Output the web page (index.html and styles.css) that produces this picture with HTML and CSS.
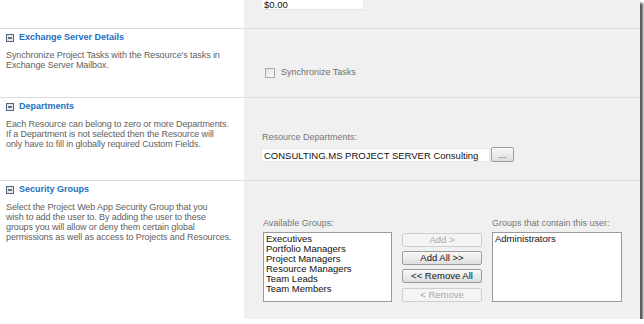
FILE: index.html
```html
<!DOCTYPE html>
<html lang="en">
<head>
  <meta charset="UTF-8" />
  <title>Edit Resource</title>
  <link rel="stylesheet" href="styles.css">
</head>
<body>
  <div class="frame">
    <div class="section top">
      <div class="desc-col"></div>
      <div class="field-col">
        <div class="textbox cost">$0.00</div>
      </div>
    </div>

    <div class="section exchange">
      <div class="desc-col">
        <h3><svg class="toggle" width="8" height="8" viewBox="0 0 8 8"><rect x="0.5" y="0.5" width="7" height="7" fill="#e4e8ee" stroke="#54657a"/><line x1="2" y1="4" x2="6" y2="4" stroke="#2f3f55" stroke-width="1.4"/></svg>Exchange Server Details</h3>
        <p>Synchronize Project Tasks with the Resource's tasks in Exchange Server Mailbox.</p>
      </div>
      <div class="field-col">
        <label class="check"><span class="box"></span>Synchronize Tasks</label>
      </div>
    </div>

    <div class="section departments">
      <div class="desc-col">
        <h3><svg class="toggle" width="8" height="8" viewBox="0 0 8 8"><rect x="0.5" y="0.5" width="7" height="7" fill="#e4e8ee" stroke="#54657a"/><line x1="2" y1="4" x2="6" y2="4" stroke="#2f3f55" stroke-width="1.4"/></svg>Departments</h3>
        <p>Each Resource can belong to zero or more Departments.<br>If a Department is not selected then the Resource will<br>only have to fill in globally required Custom Fields.</p>
      </div>
      <div class="field-col">
        <div class="field-label">Resource Departments:</div>
        <div class="picker">
          <div class="textbox dept">CONSULTING.MS PROJECT SERVER Consulting</div>
          <button class="btn browse">...</button>
        </div>
      </div>
    </div>

    <div class="section security">
      <div class="desc-col">
        <h3><svg class="toggle" width="8" height="8" viewBox="0 0 8 8"><rect x="0.5" y="0.5" width="7" height="7" fill="#e4e8ee" stroke="#54657a"/><line x1="2" y1="4" x2="6" y2="4" stroke="#2f3f55" stroke-width="1.4"/></svg>Security Groups</h3>
        <p>Select the Project Web App Security Group that you<br>wish to add the user to. By adding the user to these<br>groups you will allow or deny them certain global<br>permissions as well as access to Projects and Resources.</p>
      </div>
      <div class="field-col">
        <div class="groups">
          <div class="field-label">Available Groups:</div>
          <div></div>
          <div class="field-label">Groups that contain this user:</div>
          <ul class="listbox">
            <li>Executives</li>
            <li>Portfolio Managers</li>
            <li>Project Managers</li>
            <li>Resource Managers</li>
            <li>Team Leads</li>
            <li>Team Members</li>
          </ul>
          <div class="actions">
            <button class="btn" disabled>Add &gt;</button>
            <button class="btn">Add All &gt;&gt;</button>
            <button class="btn">&lt;&lt; Remove All</button>
            <button class="btn" disabled>&lt; Remove</button>
          </div>
          <ul class="listbox">
            <li>Administrators</li>
          </ul>
        </div>
      </div>
    </div>
  </div>
</body>
</html>
```

FILE: styles.css
```css
body {
  margin: 0;
  background: #ffffff;
  font-family: 'Liberation Sans', Arial, sans-serif;
  font-size: 9px;
  color: #5f5f5f;
}

.frame {
  width: 640px;
  height: 319px;
  overflow: hidden;
  background: #ffffff;
  box-shadow: 3px 3px 2px rgba(0, 0, 0, 0.65);
}

.section {
  display: grid;
  grid-template-columns: 244px 1fr;
  border-top: 1px solid #dcdcdc;
}

.section.top {
  border-top: none;
  height: 28px;
}

.section.exchange { height: 68px; }
.section.departments { height: 82px; }
.section.security { height: 139px; }

.desc-col {
  padding: 3px 0 0 6px;
}

.field-col {
  background: #f0f0f0;
  padding-left: 18px;
}

h3 {
  margin: 0 0 7px;
  display: flex;
  align-items: center;
  gap: 5px;
  font-size: 9px;
  line-height: 11px;
  color: #1c6fc0;
}

.toggle {
  flex: none;
}

p {
  margin: 0;
  line-height: 10px;
  color: #616161;
  letter-spacing: -0.1px;
}

.textbox {
  background: #ffffff;
  color: #111111;
  font-size: 9.5px;
  box-sizing: border-box;
  padding-left: 2px;
}

.textbox.cost {
  width: 101px;
  height: 10px;
  line-height: 9px;
  border-bottom: 1px solid #e2e2e2;
}

.check {
  display: flex;
  align-items: center;
  gap: 6px;
  margin: 38px 0 0 3px;
  line-height: 11px;
  color: #707070;
}

.box {
  width: 8px;
  height: 8px;
  border: 1px solid #a9a9a9;
  background: linear-gradient(135deg, #e2e2e2, #fbfbfb);
}

.departments .field-col {
  padding-top: 34px;
}

.field-label {
  line-height: 11px;
  color: #777777;
}

.picker {
  display: flex;
  align-items: center;
  gap: 1px;
  margin: 4px 0 0 -1px;
}

.textbox.dept {
  width: 229px;
  height: 14px;
  line-height: 14px;
  border: 1px solid #e6e6e6;
}

.btn {
  font-family: 'Liberation Sans', Arial, sans-serif;
  font-size: 9.5px;
  color: #111111;
  border: 1px solid #9c9c9c;
  border-radius: 2px;
  background: linear-gradient(#f8f8f8, #dedede);
  padding: 0;
  height: 14px;
  line-height: 12px;
}

.btn:disabled {
  color: #a8a8a8;
  border-color: #cfcfcf;
  background: #f4f4f4;
}

.btn.browse {
  width: 23px;
  height: 15px;
  color: #555555;
}

.security .field-col {
  padding-top: 37px;
  padding-left: 19px;
}

.groups {
  display: grid;
  grid-template-columns: 129px 80px 130px;
  column-gap: 10px;
  row-gap: 3px;
}

.listbox {
  list-style: none;
  margin: 0;
  padding: 1px 2px;
  height: 70px;
  box-sizing: border-box;
  background: #ffffff;
  border: 1px solid #9a9a9a;
  color: #111111;
  font-size: 9.5px;
  line-height: 10px;
}

.actions {
  display: flex;
  flex-direction: column;
  gap: 4px;
  padding-top: 1px;
}

.actions .btn:last-child {
  margin-top: 1px;
}
```
